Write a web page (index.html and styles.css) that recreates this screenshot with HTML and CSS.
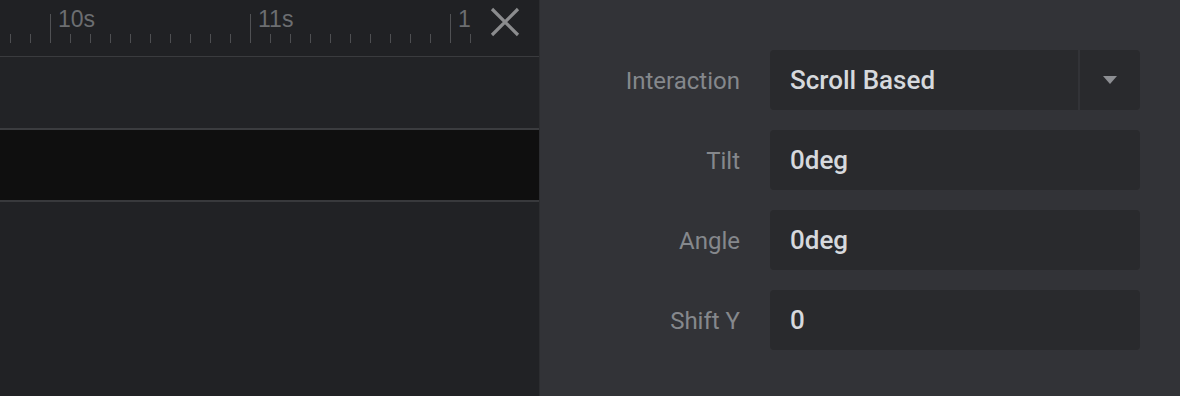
FILE: index.html
```html
<!DOCTYPE html>
<html lang="en">
<head>
  <meta charset="UTF-8">
  <title>Interaction settings</title>
  <link rel="stylesheet" href="styles.css">
</head>
<body>
  <div class="editor">
    <!-- timeline side -->
    <div class="timeline">
      <div class="ruler">
        <div class="ticks">
          <span class="tick"></span><span class="tick"></span>
          <span class="tick major"><em>10s</em></span>
          <span class="tick"></span><span class="tick"></span><span class="tick"></span><span class="tick"></span><span class="tick"></span>
          <span class="tick"></span><span class="tick"></span><span class="tick"></span><span class="tick"></span>
          <span class="tick major"><em>11s</em></span>
          <span class="tick"></span><span class="tick"></span><span class="tick"></span><span class="tick"></span><span class="tick"></span>
          <span class="tick"></span><span class="tick"></span><span class="tick"></span><span class="tick"></span>
          <span class="tick major"><em>1</em></span>
          <span class="tick"></span>
        </div>
        <button class="close-btn" aria-label="Close">
          <svg width="30" height="30" viewBox="0 0 30 30">
            <path d="M2 2 L28 28 M28 2 L2 28" stroke="#8b8c8e" stroke-width="3.2" fill="none"/>
          </svg>
        </button>
      </div>
      <div class="track"></div>
      <div class="track track-active"></div>
      <div class="track-rest"></div>
    </div>

    <!-- settings side -->
    <div class="settings">
      <div class="field-row">
        <label class="field-label">Interaction</label>
        <div class="field field-select">
          <span class="field-value">Scroll Based</span>
          <span class="select-arrow"></span>
        </div>
      </div>
      <div class="field-row">
        <label class="field-label">Tilt</label>
        <div class="field"><span class="field-value">0deg</span></div>
      </div>
      <div class="field-row">
        <label class="field-label">Angle</label>
        <div class="field"><span class="field-value">0deg</span></div>
      </div>
      <div class="field-row">
        <label class="field-label">Shift Y</label>
        <div class="field"><span class="field-value">0</span></div>
      </div>
    </div>
  </div>
</body>
</html>
```

FILE: styles.css
```css
body {
  margin: 0;
  padding: 0;
  background-color: #323337;
  font-family: Roboto, "Liberation Sans", sans-serif;
}
.editor {
  display: flex;
  height: 396px;
  overflow: hidden;
}
.timeline {
  width: 539px;
  flex-shrink: 0;
  display: flex;
  flex-direction: column;
  background-color: #212225;
  border-right: 1px solid #2c2d30;
}
.ruler {
  height: 56px;
  display: flex;
  align-items: flex-start;
  border-bottom: 1px solid #3a3b3e;
  background-color: #202124;
}
.ticks {
  display: flex;
  gap: 19px;
  padding-left: 10px;
  padding-top: 14px;
  height: 29px;
  align-items: flex-end;
}
.tick {
  position: relative;
  width: 1px;
  height: 9px;
  background-color: #4e4f52;
}
.tick.major {
  height: 29px;
  background-color: #505154;
}
.tick em {
  position: absolute;
  left: 8px;
  top: -6px;
  font-style: normal;
  font-family: "Liberation Sans", Arial, sans-serif;
  font-size: 23px;
  line-height: 23px;
  color: #6c6e71;
}
.close-btn {
  margin-left: 19px;
  margin-top: 7px;
  padding: 0;
  border: none;
  background: none;
  width: 30px;
  height: 30px;
}
.track {
  height: 71px;
  background-color: #222326;
  border-bottom: 2px solid #3b3c3f;
}
.track-active {
  height: 70px;
  background-color: #0f0f0f;
  border-bottom: 2px solid #38393c;
}
.track-rest {
  flex: 1;
  background-color: #212225;
}
.settings {
  flex: 1;
  display: flex;
  flex-direction: column;
  gap: 20px;
  padding: 50px 40px 0 0;
}
.field-row {
  display: flex;
  align-items: center;
  gap: 30px;
  height: 60px;
}
.field-label {
  width: 200px;
  padding-top: 2px;
  text-align: right;
  font-size: 24px;
  color: #85888c;
}
.field {
  flex: 1;
  height: 60px;
  display: flex;
  align-items: center;
  background-color: #292a2d;
  border-radius: 4px;
}
.field-value {
  flex: 1;
  padding-left: 20px;
  font-size: 26px;
  font-weight: 500;
  color: #d6d9dd;
}
.field-select {
  background-color: transparent;
  gap: 2px;
}
.field-select .field-value {
  height: 60px;
  line-height: 60px;
  background-color: #292a2d;
  border-radius: 4px 0 0 4px;
}
.select-arrow {
  width: 60px;
  height: 60px;
  background-color: #292a2d;
  border-radius: 0 4px 4px 0;
  display: flex;
  align-items: center;
  justify-content: center;
}
.select-arrow::after {
  content: "";
  border-left: 7px solid transparent;
  border-right: 7px solid transparent;
  border-top: 8px solid #8d8f93;
}
```
